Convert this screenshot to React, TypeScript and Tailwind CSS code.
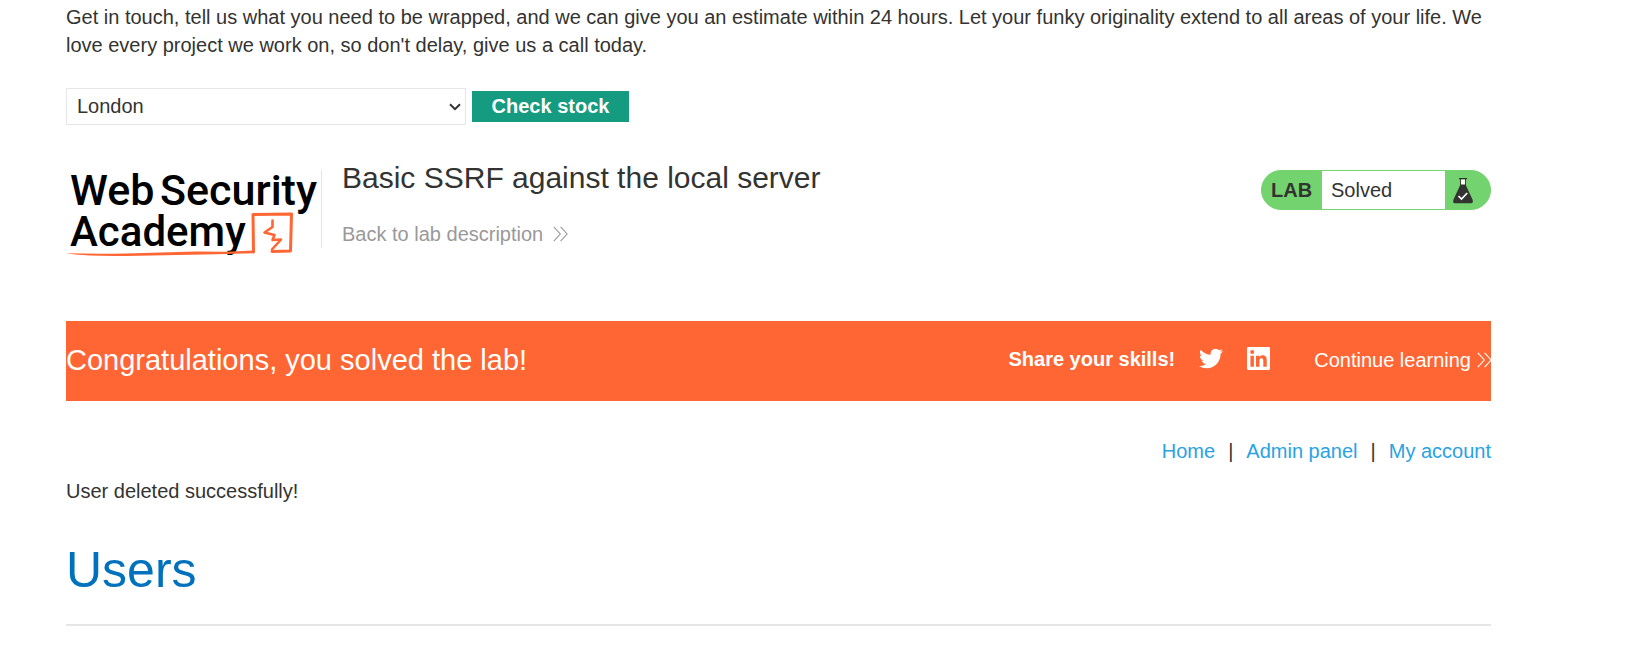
import React from "react";

function Chevrons({ className }: { className: string }) {
  return (
    <svg viewBox="0 0 15 16" className={className} fill="none" stroke="currentColor" strokeWidth="1.1" aria-hidden="true">
      <path d="M0.8 0.8 7.3 8 0.8 15.2M7.6 0.8 14.1 8 7.6 15.2" />
    </svg>
  );
}

function Logo() {
  return (
    <svg viewBox="0 0 255 98" className="h-[98px] w-[255px] shrink-0" role="img" aria-label="Web Security Academy">
      <g fill="#000" fontFamily="Roboto, sans-serif" fontWeight="500" fontSize="43">
        <text x="4" y="45">Web</text>
        <text x="94" y="45">Security</text>
        <text x="4" y="86" fontSize="42">Academy</text>
      </g>
      <g fill="none" stroke="#ff6633" strokeLinejoin="round" strokeLinecap="round">
        <path strokeWidth="3" d="M187.5 92 187 54.500 225.5 54 224.500 91 206 91.500" />
        <path strokeWidth="2.600" d="M206.500 60.500V67L198.500 72.500 208.500 75 206.500 80 215 79.500 206 89.500" />
      </g>
      <path fill="#ff6633" d="M0 93.300Q30 94 60 93.500L130 91.600 160 91.800 188 90.500V93.300L150 94.300 60 95.900Q20 96.500 0 93.300Z" />
    </svg>
  );
}

function Flask() {
  return (
    <svg viewBox="0 0 20 26" className="h-[26px] w-5" aria-hidden="true">
      <path fill="#fff" d="M7.500 1.500h5V7h-5z" />
      <path fill="#333332" d="M6 0h8v1.300h-1V7.500l6.600 14.300Q20.500 25.300 18 25.300H2Q-.5 25.300.4 21.800L7 7.500V1.300H6zM7.900 1.300V6.500h4.200V1.300z" />
      <path fill="none" stroke="#fff" strokeWidth="1.700" d="m5.500 18 3 3 5.700-6" />
    </svg>
  );
}

function Twitter() {
  return (
    <svg viewBox="0 1.500 24 21" className="h-[21px] w-6" fill="#fff" aria-hidden="true">
      <path d="M23.953 4.570a10 10 0 01-2.825.775 4.958 4.958 0 002.163-2.723c-.951.555-2.005.959-3.127 1.184a4.920 4.920 0 00-8.384 4.482C7.690 8.095 4.067 6.130 1.640 3.162a4.822 4.822 0 00-.666 2.475c0 1.710.870 3.213 2.188 4.096a4.904 4.904 0 01-2.228-.616v.060a4.923 4.923 0 003.946 4.827 4.996 4.996 0 01-2.212.085 4.936 4.936 0 004.604 3.417 9.867 9.867 0 01-6.102 2.105c-.390 0-.779-.023-1.170-.067a13.995 13.995 0 007.557 2.209c9.053 0 13.998-7.496 13.998-13.985 0-.210 0-.420-.015-.630A9.935 9.935 0 0024 4.590z" />
    </svg>
  );
}

function LinkedIn() {
  return (
    <svg viewBox="0 0 24 24" className="size-[23px]" aria-hidden="true">
      <rect width="24" height="24" rx="1.200" fill="#fff" />
      <circle cx="5.400" cy="5.300" r="2.100" fill="#ff6633" />
      <path fill="#ff6633" d="M3.600 9h3.600v11.500H3.600zM9.400 9h3.400v1.600h.1c.5-.9 1.700-1.900 3.400-1.900 3.600 0 4.300 2.400 4.300 5.500v6.300H17v-5.600c0-1.300 0-3.100-1.900-3.100s-2.100 1.500-2.100 3v5.700H9.400z" />
    </svg>
  );
}

export default function App() {
  return (
    <main className="bg-white pt-[3px] pr-[138px] pb-[30px] pl-[66px] font-['Liberation_Sans',Arial,sans-serif] text-[20px] leading-7 text-[#333332]">
      <p>
        Get in touch, tell us what you need to be wrapped, and we can give you an estimate within 24 hours. Let your funky
        originality extend to all areas of your life. We love every project we work on, so don't delay, give us a call today.
      </p>
      <form className="mt-[29px] flex items-center gap-1.5" onSubmit={(e) => e.preventDefault()}>
        <div className="relative">
          <select
            aria-label="Store"
            className="block h-[37px] w-[400px] appearance-none border border-[#e6e6e6] bg-white px-[10px] pb-0.5 text-[20px]"
          >
            <option>London</option>
            <option>Paris</option>
            <option>Milan</option>
          </select>
          <svg
            viewBox="0 0 12 8"
            className="pointer-events-none absolute top-[15px] right-[5px] h-2 w-3"
            fill="none"
            stroke="#333332"
            strokeWidth="2"
            aria-hidden="true"
          >
            <path d="m1 1.200 5 5 5-5" />
          </svg>
        </div>
        <button className="h-[31px] w-[157px] bg-[#159b80] pb-0.5 font-bold text-white">Check stock</button>
      </form>

      <header className="mt-[35px] flex items-start">
        <Logo />
        <div className="mt-[10px] h-[78px] w-px shrink-0 bg-[#e6e6e6]" />
        <div className="ml-5 flex-1">
          <h2 className="text-[30px] leading-9">Basic SSRF against the local server</h2>
          <a href="#description" className="mt-6 flex items-center gap-[10px] text-[#999999]">
            Back to lab description
            <Chevrons className="h-4 w-[15px]" />
          </a>
        </div>
        <div className="mt-[10px] flex h-10 w-[230px] shrink-0 items-stretch overflow-hidden rounded-[20px] border border-[#72d36f] bg-[#72d36f]">
          <span className="flex w-[60px] items-center pl-[9px] font-bold">LAB</span>
          <span className="flex flex-1 items-center bg-white pl-[9px]">Solved</span>
          <span className="flex w-[45px] items-center pt-0.5 pl-2">
            <Flask />
          </span>
        </div>
      </header>

      <section className="mt-[63px] flex h-20 items-center justify-between overflow-hidden bg-[#ff6633] pb-0.5 text-white">
        <h3 className="text-[29px] leading-9">Congratulations, you solved the lab!</h3>
        <div className="flex items-center">
          <span className="pb-0.5 font-bold">Share your skills!</span>
          <a href="#twitter" aria-label="Twitter" className="mb-1 ml-6">
            <Twitter />
          </a>
          <a href="#linkedin" aria-label="LinkedIn" className="mb-1 ml-6">
            <LinkedIn />
          </a>
          <a href="#learning" className="-mr-px ml-11 flex items-center gap-1.5">
            Continue learning
            <Chevrons className="h-4 w-[15px]" />
          </a>
        </div>
      </section>

      <nav className="mt-9 flex justify-end gap-[13px]">
        <a href="#home" className="text-[#29a3e2]">Home</a>
        <span>|</span>
        <a href="#admin" className="text-[#29a3e2]">Admin panel</a>
        <span>|</span>
        <a href="#account" className="text-[#29a3e2]">My account</a>
      </nav>
      <p className="mt-3">User deleted successfully!</p>
      <h1 className="mt-[35px] text-[50px] leading-[60px] text-[#0071bc]">Users</h1>
      <hr className="mt-6 border-t-2 border-[#e6e6e6]" />
    </main>
  );
}
